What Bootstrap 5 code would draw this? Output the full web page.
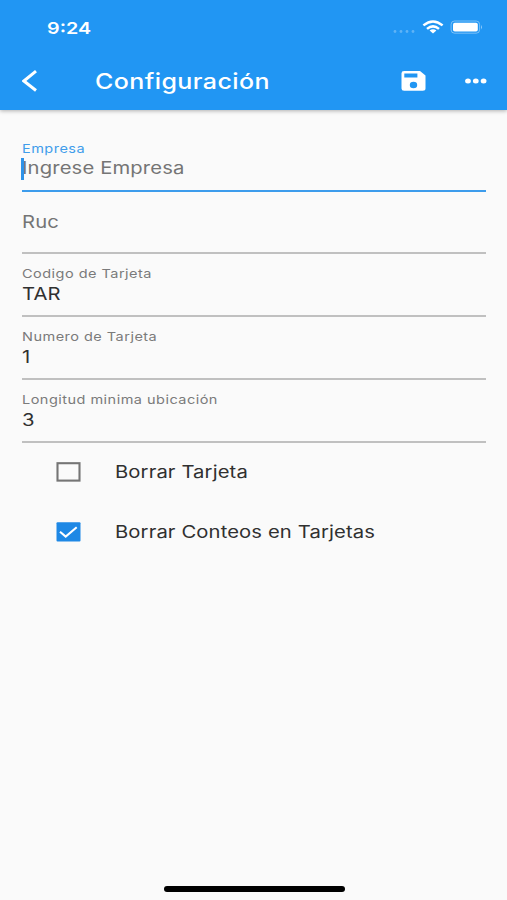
<!DOCTYPE html>
<html lang="es">
<head>
<meta charset="utf-8">
<meta name="viewport" content="width=device-width, initial-scale=1">
<title>Configuración</title>
<link href="https://cdn.jsdelivr.net/npm/bootstrap@5.3.0/dist/css/bootstrap.min.css" rel="stylesheet">
<style>
body { font-family: Inter, "Liberation Sans", sans-serif; background: #fafafa; color: #303030; height: 900px; overflow: hidden; }
svg { display: block; flex: none; }
.app-header { background: #2196f3; height: 110px; box-shadow: 0 1px 4px rgba(0,0,0,.3); }
.status-row { height: 54px; padding: 0 25px 0 47px; }
.title-row { height: 54px; padding: 0 20px 0 22px; }
.wide { display: inline-block; white-space: nowrap; transform: scaleX(1.19); transform-origin: left center; }
.clock { font-size: 16.6px; font-weight: 600; line-height: 20px; padding-top: 1px; }
.screen-title { font-size: 21px; font-weight: 550; letter-spacing: .36px; line-height: 28px; margin: 1px 0 0 57px; }
.fields { padding: 18.9px 21px 0 22px; }
.field { height: 62.8px; border-bottom: 2px solid #c0c0c0; padding-top: 11.6px; }
.field.active { border-bottom-color: #3d9cec; padding-top: 12.1px; }
.field-label { font-size: 12.2px; letter-spacing: .4px; line-height: 16px; color: #7b7b7b; display: block; width: max-content; }
.active .field-label { color: #409deb; }
.field-value { font-size: 17px; letter-spacing: .12px; line-height: 23px; display: block; width: max-content; }
.field-label + .field-value { margin-top: 1px; }
.hint { color: #757575; }
.caret { left: -1px; top: 1px; width: 2.5px; height: 22px; background: #2d92e8; }
.check-row { height: 60px; padding-left: 56px; }
.check-text { font-size: 17px; letter-spacing: .1px; line-height: 24px; margin-left: 34px; }
.checks { margin-top: -1px; }
.home-bar { width: 181px; height: 6px; background: #000; margin: 0 auto 8px 163.5px; }
</style>
<script src="https://cdn.jsdelivr.net/npm/bootstrap@5.3.0/dist/js/bootstrap.bundle.min.js" defer></script>
</head>
<body class="d-flex flex-column">
<header class="app-header text-white flex-shrink-0 position-relative">
  <div class="status-row d-flex align-items-center">
    <span class="wide clock">9:24</span>
    <svg class="ms-auto" width="90" height="20" viewBox="392 17 90 20" fill="#fff" aria-hidden="true">
      <g opacity=".28"><circle cx="395" cy="31.5" r="1.4"/><circle cx="401" cy="31.5" r="1.4"/><circle cx="407" cy="31.5" r="1.4"/><circle cx="413" cy="31.5" r="1.4"/></g>
      <g fill="none" stroke="#fff" stroke-width="2.5"><path d="M423.4 25.4Q433 17.5 442.6 25.4"/><path d="M427 28.9Q433 23.8 439 28.9"/></g>
      <path d="M429.6 30.6Q433 28 436.4 30.6L433 33.4Z"/>
      <rect x="451.1" y="21" width="28.5" height="12.2" rx="3.4" fill="none" stroke="#fff" stroke-opacity=".4"/>
      <rect x="453" y="22.8" width="24.8" height="8.8" rx="1.8"/>
      <path d="M481 25q1.8 2.2 0 4.4z" opacity=".5"/>
    </svg>
  </div>
  <div class="title-row d-flex align-items-center">
    <svg width="16" height="22" viewBox="22 70 16 22" fill="none" stroke="#fff" stroke-width="3" aria-hidden="true"><path d="M36 71.2L23.9 81L36 90.5"/></svg>
    <h1 class="wide screen-title">Configuración</h1>
    <svg class="ms-auto" width="86" height="22" viewBox="401 70 86 22" fill="#fff" aria-hidden="true">
      <path fill-rule="evenodd" d="M404.1 71H420L425.5 75.4V88.6Q425.5 90.8 422.8 90.8H404.1Q401.5 90.8 401.5 88.6V73.2Q401.5 71 404.1 71ZM404.3 73.4V77.6H417.4V73.4ZM413.5 81.8A3.7 3.2 0 1 0 413.5 88.2A3.7 3.2 0 1 0 413.5 81.8Z"/>
      <ellipse cx="468" cy="81" rx="2.9" ry="2.5"/><ellipse cx="475.8" cy="81" rx="2.9" ry="2.5"/><ellipse cx="483.6" cy="81" rx="2.9" ry="2.5"/>
    </svg>
  </div>
</header>
<main class="flex-grow-1">
  <form class="fields">
    <div class="field active">
      <label class="wide field-label">Empresa</label>
      <div class="position-relative"><span class="wide field-value hint">Ingrese Empresa</span><span class="caret position-absolute"></span></div>
    </div>
    <div class="field d-flex align-items-center pt-0"><span class="wide field-value hint">Ruc</span></div>
    <div class="field"><label class="wide field-label">Codigo de Tarjeta</label><span class="wide field-value">TAR</span></div>
    <div class="field"><label class="wide field-label">Numero de Tarjeta</label><span class="wide field-value">1</span></div>
    <div class="field"><label class="wide field-label">Longitud minima ubicación</label><span class="wide field-value">3</span></div>
  </form>
  <div class="checks">
    <div class="check-row d-flex align-items-center">
      <svg width="25" height="20" viewBox="0 0 25 20" fill="none" aria-hidden="true"><rect x="1.5" y="1.2" width="22" height="17.4" stroke="#757575" stroke-width="2.1"/></svg>
      <span class="wide check-text">Borrar Tarjeta</span>
    </div>
    <div class="check-row d-flex align-items-center">
      <svg width="25" height="20" viewBox="0 0 25 20" fill="none" aria-hidden="true"><rect x=".5" y=".3" width="24" height="19.2" rx="1" fill="#1e88e5"/><path d="M4 9.8L9.7 14.6L20.7 5.3" stroke="#fff" stroke-width="2.1"/></svg>
      <span class="wide check-text">Borrar Conteos en Tarjetas</span>
    </div>
  </div>
</main>
<div class="home-bar rounded-pill flex-shrink-0"></div>
</body>
</html>
